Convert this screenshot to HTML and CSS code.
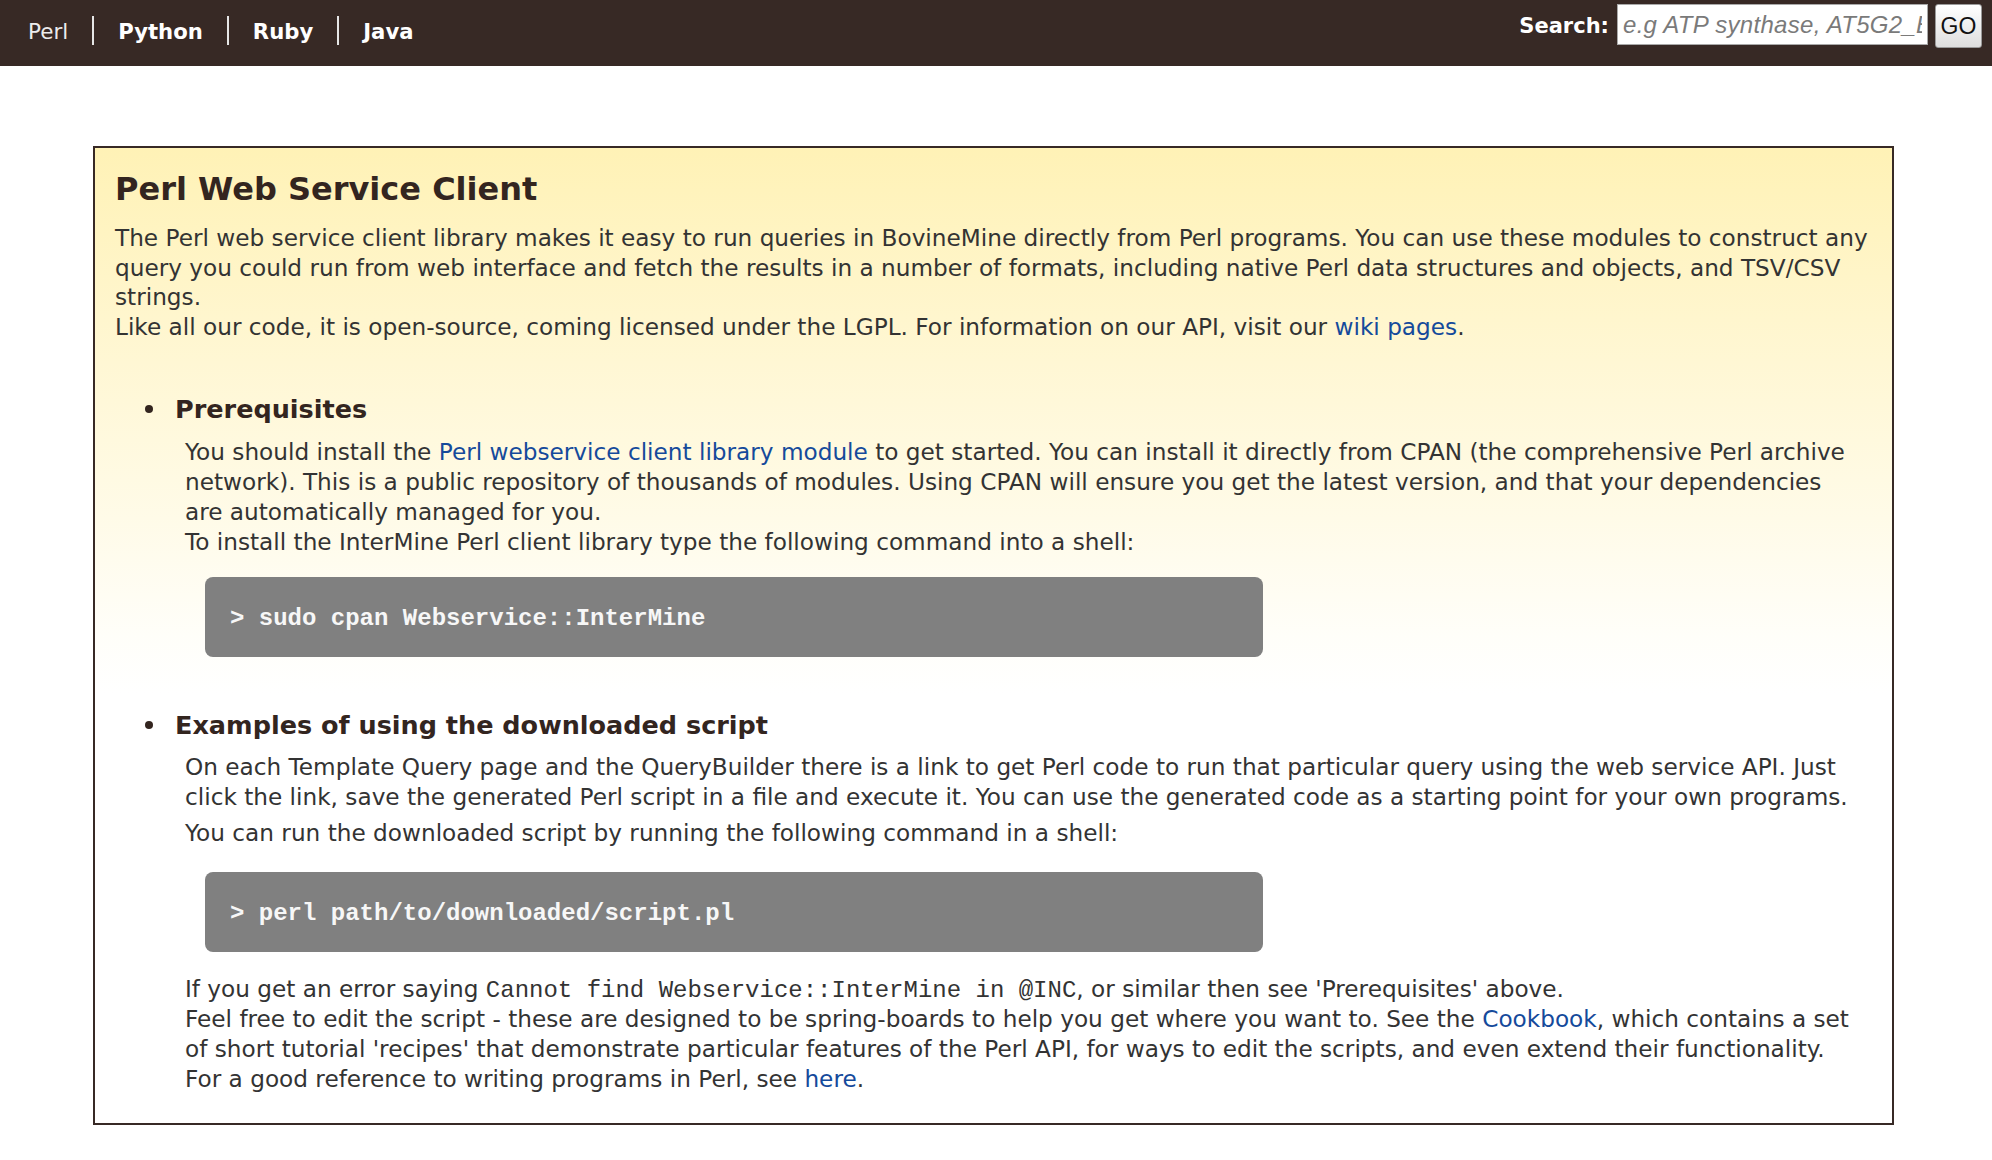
FILE: index.html
```html
<!DOCTYPE html>
<html lang="en">
<head>
<meta charset="utf-8">
<title>Perl Web Service Client</title>
<link rel="stylesheet" href="styles.css">
</head>
<body>
<header class="topbar">
  <nav class="langs">
    <a class="lang current" href="#">Perl</a>
    <a class="lang" href="#">Python</a>
    <a class="lang" href="#">Ruby</a>
    <a class="lang" href="#">Java</a>
  </nav>
  <form class="search">
    <label class="search-label" for="q">Search:</label>
    <input class="search-input" id="q" type="text" placeholder="e.g ATP synthase, AT5G2_BOVIN">
    <button class="go" type="button">GO</button>
  </form>
</header>

<main class="panel">
  <h1 class="panel-title">Perl Web Service Client</h1>
  <p class="intro">The Perl web service client library makes it easy to run queries in BovineMine directly from Perl programs. You can use these modules to construct any query you could run from web interface and fetch the results in a number of formats, including native Perl data structures and objects, and TSV/CSV strings.<br>Like all our code, it is open-source, coming licensed under the LGPL. For information on our API, visit our <a class="link" href="#">wiki pages</a>.</p>

  <ul class="sections">
    <li class="section">
      <h2 class="section-title">Prerequisites</h2>
      <p class="section-text">You should install the <a class="link" href="#">Perl webservice client library module</a> to get started. You can install it directly from CPAN (the comprehensive Perl archive network). This is a public repository of thousands of modules. Using CPAN will ensure you get the latest version, and that your dependencies are automatically managed for you.<br>To install the InterMine Perl client library type the following command into a shell:</p>
      <pre class="cmd">&gt; sudo cpan Webservice::InterMine</pre>
    </li>
    <li class="section">
      <h2 class="section-title">Examples of using the downloaded script</h2>
      <p class="section-text">On each Template Query page and the QueryBuilder there is a link to get Perl code to run that particular query using the web service API. Just click the link, save the generated Perl script in a file and execute it. You can use the generated code as a starting point for your own programs.</p>
      <p class="section-text spaced">You can run the downloaded script by running the following command in a shell:</p>
      <pre class="cmd cmd-run">&gt; perl path/to/downloaded/script.pl</pre>
      <p class="section-text after">If you get an error saying <code class="inline-code">Cannot find Webservice::InterMine in @INC</code>, or similar then see 'Prerequisites' above.<br>Feel free to edit the script - these are designed to be spring-boards to help you get where you want to. See the <a class="link" href="#">Cookbook</a>, which contains a set of short tutorial 'recipes' that demonstrate particular features of the Perl API, for ways to edit the scripts, and even extend their functionality.<br>For a good reference to writing programs in Perl, see <a class="link" href="#">here</a>.</p>
    </li>
  </ul>
</main>
</body>
</html>
```

FILE: styles.css
```css
* {
  box-sizing: border-box;
}

html, body {
  margin: 0;
  padding: 0;
  background: #ffffff;
}

body {
  font-family: "DejaVu Sans", sans-serif;
  color: #333333;
  padding-bottom: 37px;
}

/* ---------- top bar ---------- */
.topbar {
  height: 66px;
  background: #372925;
  display: flex;
  justify-content: space-between;
  align-items: flex-start;
  padding: 0 10px 0 4px;
}

.langs {
  display: flex;
  padding-top: 16px;
}

.lang {
  display: block;
  padding: 2px 24px 0;
  height: 29px;
  line-height: 28px;
  font-size: 21.2px;
  font-weight: bold;
  color: #ffffff;
  text-decoration: none;
  border-left: 2px solid #e6e6e6;
}

.lang.current {
  font-weight: normal;
  font-size: 21.5px;
  color: #ececec;
  border-left: none;
}

.search {
  display: flex;
  align-items: flex-start;
  padding-top: 4px;
  margin: 0;
}

.search-label {
  font-size: 21px;
  font-weight: bold;
  color: #ffffff;
  line-height: 41px;
  margin-top: 2px;
  margin-right: 8px;
}

.search-input {
  width: 311px;
  height: 41px;
  margin: 0;
  padding: 0 5px;
  border: 1px solid #a9a9a9;
  background: #ffffff;
  font-family: "Liberation Sans", Arial, sans-serif;
  font-size: 24px;
  font-style: italic;
  letter-spacing: 0.3px;
  color: #333;
  outline: none;
}

.search-input::placeholder {
  color: #7a7a7a;
}

.go {
  margin-left: 7px;
  width: 47px;
  height: 44px;
  padding: 0;
  border: 1px solid #9a9a9a;
  border-radius: 3px;
  background: linear-gradient(to bottom, #ffffff, #dedede);
  font-family: "Liberation Sans", Arial, sans-serif;
  font-size: 23px;
  color: #111111;
}

/* ---------- panel ---------- */
.panel {
  display: block;
  margin: 80px 0 0 93px;
  width: 1801px;
  border: 2px solid #372925;
  padding: 22px 16px 29px 20px;
  background: linear-gradient(to bottom, #fff2b6 0%, #fff7d4 22%, #fffbe8 38%, #fffef9 50%, #ffffff 56%, #ffffff 100%);
}

.panel-title {
  margin: 0 0 15px;
  font-size: 32px;
  line-height: 38px;
  font-weight: bold;
  color: #33251f;
}

.intro {
  margin: 0;
  font-size: 23.2px;
  line-height: 29.7px;
}

.link {
  color: #154a9b;
  text-decoration: none;
}

.sections {
  list-style: none;
  margin: 0;
  padding: 0 0 0 60px;
}

.section {
  margin-top: 51.5px;
}

.section-title {
  position: relative;
  margin: 0 0 11.5px;
  font-size: 25.5px;
  line-height: 32px;
  font-weight: bold;
  color: #33251f;
}

.section-title::before {
  content: "";
  position: absolute;
  left: -30px;
  top: 12px;
  width: 8px;
  height: 8px;
  border-radius: 50%;
  background: #33251f;
}

.section-text {
  margin: 0 14px 0 10px;
  font-size: 23.2px;
  line-height: 29.9px;
}

.section-text.spaced {
  margin-top: 6px;
}

.section-text.after {
  margin-top: 22px;
}

.inline-code {
  font-family: "Liberation Mono", "Courier New", monospace;
  font-size: 24px;
  line-height: 1;
  color: #333333;
}

.cmd {
  margin: 21px 0 0 30px;
  width: 1058px;
  height: 80px;
  padding: 4px 25px 0;
  border-radius: 8px;
  background: #808080;
  color: #f7f7f7;
  font-family: "Liberation Mono", "Courier New", monospace;
  font-weight: bold;
  font-size: 24px;
  line-height: 76px;
  white-space: pre;
  overflow: hidden;
}

.cmd.cmd-run {
  margin-top: 24px;
}
```
